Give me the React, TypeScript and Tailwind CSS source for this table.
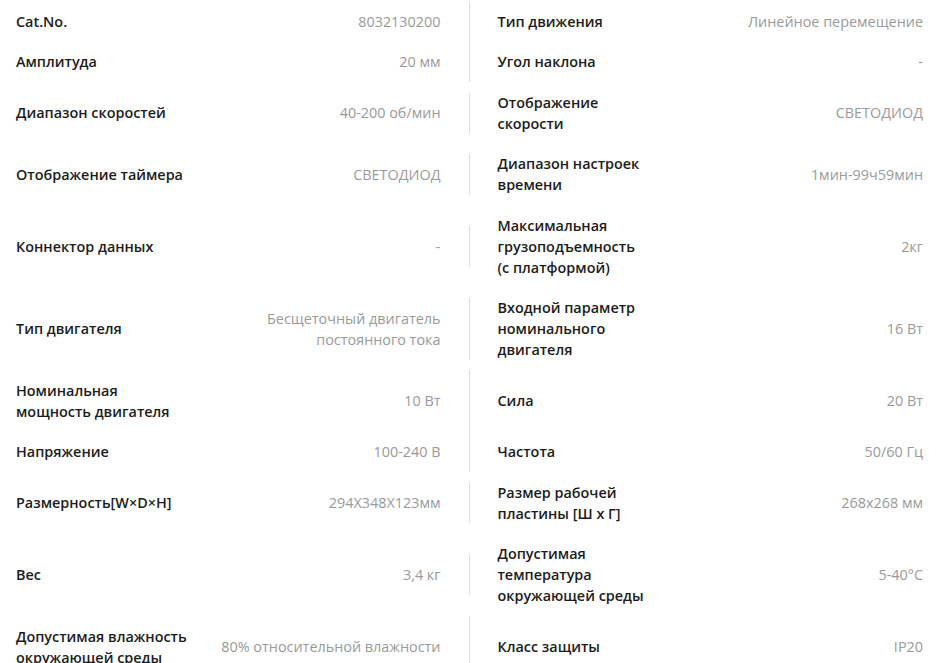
import React from "react";

type Row = { l: [string[], string[]]; r: [string[], string[]] };

const rows: Row[] = [
  { l: [["Cat.No."], ["8032130200"]], r: [["Тип движения"], ["Линейное перемещение"]] },
  { l: [["Амплитуда"], ["20 мм"]], r: [["Угол наклона"], ["-"]] },
  { l: [["Диапазон скоростей"], ["40-200 об/мин"]], r: [["Отображение", "скорости"], ["СВЕТОДИОД"]] },
  { l: [["Отображение таймера"], ["СВЕТОДИОД"]], r: [["Диапазон настроек", "времени"], ["1мин-99ч59мин"]] },
  { l: [["Коннектор данных"], ["-"]], r: [["Максимальная", "грузоподъемность", "(с платформой)"], ["2кг"]] },
  { l: [["Тип двигателя"], ["Бесщеточный двигатель", "постоянного тока"]], r: [["Входной параметр", "номинального", "двигателя"], ["16 Вт"]] },
  { l: [["Номинальная", "мощность двигателя"], ["10 Вт"]], r: [["Сила"], ["20 Вт"]] },
  { l: [["Напряжение"], ["100-240 В"]], r: [["Частота"], ["50/60 Гц"]] },
  { l: [["Размерность[W×D×H]"], ["294X348X123мм"]], r: [["Размер рабочей", "пластины [Ш х Г]"], ["268x268 мм"]] },
  { l: [["Вес"], ["3,4 кг"]], r: [["Допустимая", "температура", "окружающей среды"], ["5-40°C"]] },
  { l: [["Допустимая влажность", "окружающей среды"], ["80% относительной влажности"]], r: [["Класс защиты"], ["IP20"]] },
];

function Lines({ lines }: { lines: string[] }) {
  return (
    <>
      {lines.map((t, i) => (
        <div key={i} className="whitespace-nowrap">
          {t}
        </div>
      ))}
    </>
  );
}

export default function App() {
  return (
    <div
      className="w-full bg-white pl-4 pr-[18px] pt-[1px] text-[14.4px] leading-[21px]"
      style={{ fontFamily: '"Open Sans", "Noto Sans", sans-serif' }}
    >
      {rows.map((row, i) => (
        <div key={i} className="flex items-center">
          <div className="flex w-1/2 items-center justify-between border-r border-[#dcdcdc] py-[9.75px] pr-7">
            <div className="font-semibold text-[#1c1c1c]">
              <Lines lines={row.l[0]} />
            </div>
            <div className="text-right text-[#9a9a9a]">
              <Lines lines={row.l[1]} />
            </div>
          </div>
          <div className="flex w-1/2 items-center justify-between py-[9.75px] pl-7">
            <div className="font-semibold text-[#1c1c1c]">
              <Lines lines={row.r[0]} />
            </div>
            <div className="text-right text-[#9a9a9a]">
              <Lines lines={row.r[1]} />
            </div>
          </div>
        </div>
      ))}
    </div>
  );
}
